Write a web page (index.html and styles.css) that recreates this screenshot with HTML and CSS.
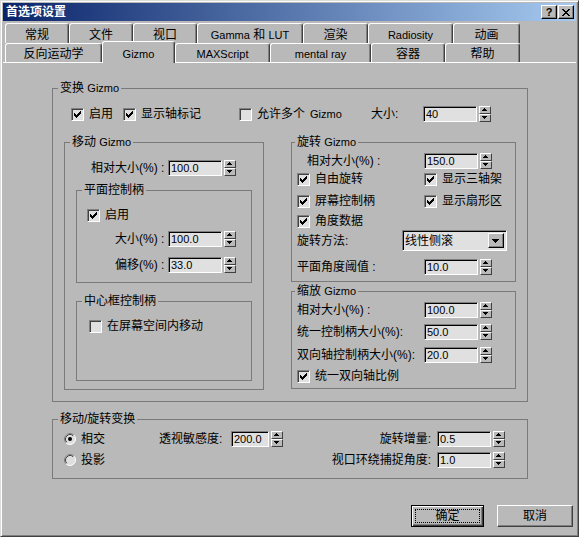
FILE: index.html
```html
<!DOCTYPE html>
<html lang="zh-CN">
<head>
<meta charset="utf-8">
<title>首选项设置</title>
<link rel="stylesheet" href="styles.css">
</head>
<body>
<div class="window">
  <div class="titlebar">
    <span class="title">首选项设置</span>
    <div class="tbtns">
      <span class="tbtn"><span class="q">?</span></span>
      <span class="tbtn"><svg width="8" height="7" viewBox="0 0 8 7" shape-rendering="crispEdges"><path d="M0 0h2v1H0zM6 0h2v1H6zM1 1h2v1H1zM5 1h2v1H5zM2 2h4v1H2zM3 3h2v1H3zM2 4h4v1H2zM1 5h2v1H1zM5 5h2v1H5zM0 6h2v1H0zM6 6h2v1H6z"/></svg></span>
    </div>
  </div>

  <div class="tabs">
    <div class="tabrow back">
      <div class="tab w64">常规</div>
      <div class="tab w64">文件</div>
      <div class="tab w64">视口</div>
      <div class="tab w106"><span class="en">Gamma</span>&nbsp;和&nbsp;<span class="en">LUT</span></div>
      <div class="tab w65">渲染</div>
      <div class="tab w85"><span class="en">Radiosity</span></div>
      <div class="tab w67">动画</div>
    </div>
    <div class="tabrow front">
      <div class="tab w97">反向运动学</div>
      <div class="tab sel w73"><span class="en">Gizmo</span></div>
      <div class="tab w95"><span class="en">MAXScript</span></div>
      <div class="tab w101"><span class="en">mental ray</span></div>
      <div class="tab w74">容器</div>
      <div class="tab w75">帮助</div>
    </div>
  </div>

  <div class="panel">
    <fieldset class="grp g-tf">
      <legend>变换 <span class="en">Gizmo</span></legend>
      <div class="row top-row">
        <label class="chk i1"><span class="cb"><svg width="7" height="7" viewBox="0 0 7 7" shape-rendering="crispEdges"><path d="M0 2h1v3H0zM1 3h1v3H1zM2 4h1v3H2zM3 3h1v3H3zM4 2h1v3H4zM5 1h1v3H5zM6 0h1v3H6z"/></svg></span>启用</label>
        <label class="chk i2"><span class="cb"><svg width="7" height="7" viewBox="0 0 7 7" shape-rendering="crispEdges"><path d="M0 2h1v3H0zM1 3h1v3H1zM2 4h1v3H2zM3 3h1v3H3zM4 2h1v3H4zM5 1h1v3H5zM6 0h1v3H6z"/></svg></span>显示轴标记</label>
        <label class="chk i3"><span class="cb"></span>允许多个 <span class="en">Gizmo</span></label>
        <span class="lb w52">大小:</span>
        <span class="inp">40</span>
        <span class="spin"><i class="up"></i><i class="dn"></i></span>
      </div>

      <div class="cols">
        <fieldset class="grp g-move">
          <legend>移动 <span class="en">Gizmo</span></legend>
          <div class="row mv-r1">
            <span class="lb w77">相对大小(%) :</span>
            <span class="inp">100.0</span>
            <span class="spin"><i class="up"></i><i class="dn"></i></span>
          </div>

          <fieldset class="grp g-plane">
            <legend>平面控制柄</legend>
            <div class="row pl-r1">
              <label class="chk"><span class="cb"><svg width="7" height="7" viewBox="0 0 7 7" shape-rendering="crispEdges"><path d="M0 2h1v3H0zM1 3h1v3H1zM2 4h1v3H2zM3 3h1v3H3zM4 2h1v3H4zM5 1h1v3H5zM6 0h1v3H6z"/></svg></span>启用</label>
            </div>
            <div class="row pl-r2">
              <span class="lb w53">大小(%) :</span>
              <span class="inp">100.0</span>
              <span class="spin"><i class="up"></i><i class="dn"></i></span>
            </div>
            <div class="row pl-r3">
              <span class="lb w53">偏移(%) :</span>
              <span class="inp">33.0</span>
              <span class="spin"><i class="up"></i><i class="dn"></i></span>
            </div>
          </fieldset>

          <fieldset class="grp g-center">
            <legend>中心框控制柄</legend>
            <div class="row ce-r1">
              <label class="chk"><span class="cb"></span>在屏幕空间内移动</label>
            </div>
          </fieldset>
        </fieldset>

        <div class="rcol">
          <fieldset class="grp g-rot">
            <legend>旋转 <span class="en">Gizmo</span></legend>
            <div class="row ro-r1">
              <span class="lb w117">相对大小(%) :</span>
              <span class="inp">150.0</span>
              <span class="spin"><i class="up"></i><i class="dn"></i></span>
            </div>
            <div class="row ro-r2">
              <label class="chk w127"><span class="cb"><svg width="7" height="7" viewBox="0 0 7 7" shape-rendering="crispEdges"><path d="M0 2h1v3H0zM1 3h1v3H1zM2 4h1v3H2zM3 3h1v3H3zM4 2h1v3H4zM5 1h1v3H5zM6 0h1v3H6z"/></svg></span>自由旋转</label>
              <label class="chk"><span class="cb"><svg width="7" height="7" viewBox="0 0 7 7" shape-rendering="crispEdges"><path d="M0 2h1v3H0zM1 3h1v3H1zM2 4h1v3H2zM3 3h1v3H3zM4 2h1v3H4zM5 1h1v3H5zM6 0h1v3H6z"/></svg></span>显示三轴架</label>
            </div>
            <div class="row ro-r3">
              <label class="chk w127"><span class="cb"><svg width="7" height="7" viewBox="0 0 7 7" shape-rendering="crispEdges"><path d="M0 2h1v3H0zM1 3h1v3H1zM2 4h1v3H2zM3 3h1v3H3zM4 2h1v3H4zM5 1h1v3H5zM6 0h1v3H6z"/></svg></span>屏幕控制柄</label>
              <label class="chk"><span class="cb"><svg width="7" height="7" viewBox="0 0 7 7" shape-rendering="crispEdges"><path d="M0 2h1v3H0zM1 3h1v3H1zM2 4h1v3H2zM3 3h1v3H3zM4 2h1v3H4zM5 1h1v3H5zM6 0h1v3H6z"/></svg></span>显示扇形区</label>
            </div>
            <div class="row ro-r4">
              <label class="chk"><span class="cb"><svg width="7" height="7" viewBox="0 0 7 7" shape-rendering="crispEdges"><path d="M0 2h1v3H0zM1 3h1v3H1zM2 4h1v3H2zM3 3h1v3H3zM4 2h1v3H4zM5 1h1v3H5zM6 0h1v3H6z"/></svg></span>角度数据</label>
            </div>
            <div class="row ro-r5">
              <span class="lb w105">旋转方法:</span>
              <span class="combo"><span class="combo-text">线性侧滚</span><span class="combo-btn"></span></span>
            </div>
            <div class="row ro-r6">
              <span class="lb w127">平面角度阈值 :</span>
              <span class="inp">10.0</span>
              <span class="spin"><i class="up"></i><i class="dn"></i></span>
            </div>
          </fieldset>

          <fieldset class="grp g-scale">
            <legend>缩放 <span class="en">Gizmo</span></legend>
            <div class="row sc-r1">
              <span class="lb w127">相对大小(%) :</span>
              <span class="inp">100.0</span>
              <span class="spin"><i class="up"></i><i class="dn"></i></span>
            </div>
            <div class="row sc-r2">
              <span class="lb w127">统一控制柄大小(%):</span>
              <span class="inp">50.0</span>
              <span class="spin"><i class="up"></i><i class="dn"></i></span>
            </div>
            <div class="row sc-r3">
              <span class="lb w127">双向轴控制柄大小(%):</span>
              <span class="inp">20.0</span>
              <span class="spin"><i class="up"></i><i class="dn"></i></span>
            </div>
            <div class="row sc-r4">
              <label class="chk"><span class="cb"><svg width="7" height="7" viewBox="0 0 7 7" shape-rendering="crispEdges"><path d="M0 2h1v3H0zM1 3h1v3H1zM2 4h1v3H2zM3 3h1v3H3zM4 2h1v3H4zM5 1h1v3H5zM6 0h1v3H6z"/></svg></span>统一双向轴比例</label>
            </div>
          </fieldset>
        </div>
      </div>
    </fieldset>

    <fieldset class="grp g-mr">
      <legend>移动/旋转变换</legend>
      <div class="row mr-row">
        <label class="radio-item"><svg class="rd" width="12" height="12" viewBox="0 0 12 12"><circle cx="6" cy="6" r="5.5" fill="#dedede"/><path d="M2.11 9.89A5.5 5.5 0 0 1 9.89 2.11" stroke="#808080" fill="none"/><path d="M9.89 2.11A5.5 5.5 0 0 1 2.11 9.89" stroke="#fff" fill="none"/><path d="M2.82 9.18A4.5 4.5 0 0 1 9.18 2.82" stroke="#404040" fill="none"/><circle cx="6" cy="6" r="2" fill="#000"/></svg>相交</label>
        <span class="lb w72">透视敏感度:</span>
        <span class="inp w38">200.0</span>
        <span class="spin"><i class="up"></i><i class="dn"></i></span>
        <span class="spacer"></span>
        <span class="lb rlbl">旋转增量:</span>
        <span class="inp">0.5</span>
        <span class="spin"><i class="up"></i><i class="dn"></i></span>
      </div>
      <div class="row mr-row">
        <label class="radio-item"><svg class="rd" width="12" height="12" viewBox="0 0 12 12"><circle cx="6" cy="6" r="5.5" fill="#dedede"/><path d="M2.11 9.89A5.5 5.5 0 0 1 9.89 2.11" stroke="#808080" fill="none"/><path d="M9.89 2.11A5.5 5.5 0 0 1 2.11 9.89" stroke="#fff" fill="none"/><path d="M2.82 9.18A4.5 4.5 0 0 1 9.18 2.82" stroke="#404040" fill="none"/></svg>投影</label>
        <span class="spacer"></span>
        <span class="lb rlbl">视口环绕捕捉角度:</span>
        <span class="inp">1.0</span>
        <span class="spin"><i class="up"></i><i class="dn"></i></span>
      </div>
    </fieldset>

    <div class="buttons">
      <span class="btn ok">确定</span>
      <span class="btn cancel">取消</span>
    </div>
  </div>
</div>
</body>
</html>
```

FILE: styles.css
```css
* { box-sizing: border-box; }
html, body { margin: 0; padding: 0; }
body {
  background: #b9b9b9;
  font-family: "Liberation Sans", "Noto Sans CJK SC", sans-serif;
  font-size: 12px;
  line-height: 14px;
  color: #000;
}
.en { font-size: 11px; }

.window {
  width: 579px;
  height: 537px;
  border: 1px solid;
  border-color: #dcdcdc #404040 #404040 #dcdcdc;
  box-shadow: inset 1px 1px #fff, inset -1px -1px #808080;
  padding: 2px;
  background: #b9b9b9;
  display: flex;
  flex-direction: column;
}

/* title bar */
.titlebar {
  flex: none;
  height: 18px;
  background: linear-gradient(to right, #0a246a, #a6caf0);
  display: flex;
  align-items: center;
  justify-content: space-between;
  padding: 0 2px 0 3px;
}
.title { color: #fff; font-weight: bold; font-size: 12px; white-space: nowrap; }
.tbtns { display: flex; gap: 1px; }
.tbtn {
  width: 16px;
  height: 14px;
  background: #b9b9b9;
  border: 1px solid;
  border-color: #fff #000 #000 #fff;
  box-shadow: inset -1px -1px #808080;
  display: flex;
  align-items: center;
  justify-content: center;
}
.q { font-weight: bold; font-size: 11px; line-height: 11px; }

/* tabs */
.tabs { flex: none; margin-top: 2px; padding-left: 2px; }
.tabrow { display: flex; height: 20px; }
.tabrow.front { height: 19px; }
.tab {
  height: 100%;
  border-top: 1px solid #fff;
  border-left: 1px solid #fff;
  border-right: 1px solid #404040;
  border-radius: 3px 3px 0 0;
  box-shadow: inset -1px 0 #808080;
  display: flex;
  justify-content: center;
  align-items: center;
  padding-top: 2px;
  white-space: nowrap;
  background: #b9b9b9;
}
.tab.sel {
  height: calc(100% + 3px);
  margin-top: -2px;
  position: relative;
  z-index: 1;
}
.w64 { width: 64px; }
.w65 { width: 65px; }
.w67 { width: 67px; }
.w85 { width: 85px; }
.w106 { width: 106px; }
.w97 { width: 97px; }
.w73 { width: 73px; }
.w95 { width: 95px; }
.w101 { width: 101px; }
.w74 { width: 74px; }
.w75 { width: 75px; }

/* panel */
.panel {
  flex: 1;
  border-top: 1px solid #fff;
  padding-left: 49px;
}

.grp {
  margin: 0;
  padding: 0;
  border: 1px solid #7a7a7a;
  min-width: 0;
}
.grp > legend {
  padding: 0 2px;
  margin-left: 5px;
  height: 14px;
  line-height: 14px;
  white-space: nowrap;
}

.row {
  display: flex;
  align-items: center;
  height: 16px;
  white-space: nowrap;
}
.lb { flex: none; white-space: nowrap; }
.w52 { width: 52px; }
.w53 { width: 53px; }
.w72 { width: 72px; }
.w77 { width: 77px; }
.w105 { width: 105px; }
.w117 { width: 117px; }
.w127 { width: 127px; }

.chk { display: flex; align-items: center; gap: 5px; flex: none; }
.cb {
  width: 13px;
  height: 13px;
  flex: none;
  background: #e0e0e0;
  border: 1px solid;
  border-color: #808080 #fff #fff #808080;
  box-shadow: inset 1px 1px #404040;
  display: flex;
  align-items: center;
  justify-content: center;
}
.cb svg { display: block; }

.inp {
  flex: none;
  width: 54px;
  height: 16px;
  background: #e0e0e0;
  border: 1px solid;
  border-color: #808080 #fff #fff #808080;
  box-shadow: inset 1px 1px #000;
  padding-left: 2px;
  font-size: 11px;
  line-height: 14px;
  display: flex;
  align-items: center;
}
.inp.w38 { width: 38px; }

.spin {
  flex: none;
  margin-left: 2px;
  width: 12px;
  height: 16px;
  display: flex;
  flex-direction: column;
}
.spin i {
  flex: 1;
  position: relative;
  border: 1px solid;
  border-color: #fff #404040 #404040 #fff;
  background: #b9b9b9;
}
.spin i::after {
  content: "";
  position: absolute;
  left: 2px;
  top: 1px;
  width: 1px;
  height: 1px;
}
.spin i.up::after {
  box-shadow: 2px 0 #000, 1px 1px #000, 2px 1px #000, 3px 1px #000,
    0 2px #000, 1px 2px #000, 2px 2px #000, 3px 2px #000, 4px 2px #000;
}
.spin i.dn::after {
  background: #000;
  box-shadow: 1px 0 #000, 2px 0 #000, 3px 0 #000, 4px 0 #000,
    1px 1px #000, 2px 1px #000, 3px 1px #000, 2px 2px #000;
}

/* combo */
.combo {
  flex: none;
  width: 105px;
  height: 21px;
  background: #e0e0e0;
  border: 1px solid;
  border-color: #808080 #fff #fff #808080;
  box-shadow: inset 1px 1px #000;
  display: flex;
  align-items: center;
  justify-content: space-between;
  padding: 2px 2px 2px 2px;
}
.combo-btn {
  width: 16px;
  height: 15px;
  background: #b9b9b9;
  border: 1px solid;
  border-color: #fff #000 #000 #fff;
  box-shadow: inset -1px -1px #808080;
  position: relative;
}
.combo-btn::after {
  content: "";
  position: absolute;
  left: 3px;
  top: 5px;
  width: 1px;
  height: 1px;
  background: #000;
  box-shadow: 1px 0 #000, 2px 0 #000, 3px 0 #000, 4px 0 #000, 5px 0 #000, 6px 0 #000,
    1px 1px #000, 2px 1px #000, 3px 1px #000, 4px 1px #000, 5px 1px #000,
    2px 2px #000, 3px 2px #000, 4px 2px #000, 3px 3px #000;
}

/* transform group */
.g-tf { width: 476px; margin-top: 18px; padding-bottom: 11px; }
.top-row { margin-top: 11px; padding-left: 18px; }
.i1 { width: 52px; }
.i2 { width: 116px; }
.i3 { width: 132px; }

.cols { display: flex; align-items: flex-start; margin-top: 13px; padding-left: 11px; gap: 27px; }
.rcol { width: 225px; flex: none; }

.g-move { width: 200px; flex: none; padding-bottom: 8px; }
.mv-r1 { margin-top: 11px; padding-left: 26px; }
.g-plane { margin: 7px 11px 0; padding-bottom: 9px; }
.pl-r1 { margin-top: 10px; padding-left: 10px; }
.pl-r2 { margin-top: 8px; padding-left: 38px; }
.pl-r3 { margin-top: 10px; padding-left: 38px; }
.g-center { margin: 11px 11px 0; padding-bottom: 46px; }
.ce-r1 { margin-top: 10px; padding-left: 12px; }

.g-rot { padding-bottom: 6px; }
.g-rot > legend, .g-scale > legend { margin-left: 3px; }
.ro-r1 { margin-top: 4px; padding-left: 15px; }
.ro-r2 { margin-top: 2px; padding-left: 5px; }
.ro-r3 { margin-top: 6px; padding-left: 5px; }
.ro-r4 { margin-top: 4px; padding-left: 5px; }
.ro-r5 { margin-top: 1px; padding-left: 5px; height: 21px; }
.ro-r6 { margin-top: 8px; padding-left: 5px; }

.g-scale { margin-top: 2px; padding-bottom: 4px; }
.sc-r1 { margin-top: 4px; padding-left: 5px; }
.sc-r2 { margin-top: 6px; padding-left: 5px; }
.sc-r3 { margin-top: 7px; padding-left: 5px; }
.sc-r4 { margin-top: 5px; padding-left: 5px; }

/* move/rotate transform group */
.g-mr { width: 476px; margin-top: 10px; padding-bottom: 10px; }
.mr-row { margin-top: 5px; padding: 0 22px 0 11px; }
.radio-item { width: 95px; flex: none; display: flex; align-items: center; gap: 5px; }
.rd { display: block; flex: none; }
.spacer { flex: 1; }
.rlbl { margin-right: 6px; }

/* buttons */
.buttons {
  display: flex;
  justify-content: flex-end;
  gap: 13px;
  margin-top: 26px;
  padding-right: 3px;
}
.btn {
  height: 22px;
  display: flex;
  align-items: center;
  justify-content: center;
  border: 1px solid;
  border-color: #fff #404040 #404040 #fff;
  box-shadow: inset -1px -1px #808080;
  background: #b9b9b9;
}
.btn.ok {
  width: 73px;
  border-color: #000;
  box-shadow: inset 1px 1px #fff, inset -1px -1px #404040, inset -2px -2px #808080;
  outline: 1px dotted #000;
  outline-offset: -5px;
}
.btn.cancel { width: 76px; }
```
